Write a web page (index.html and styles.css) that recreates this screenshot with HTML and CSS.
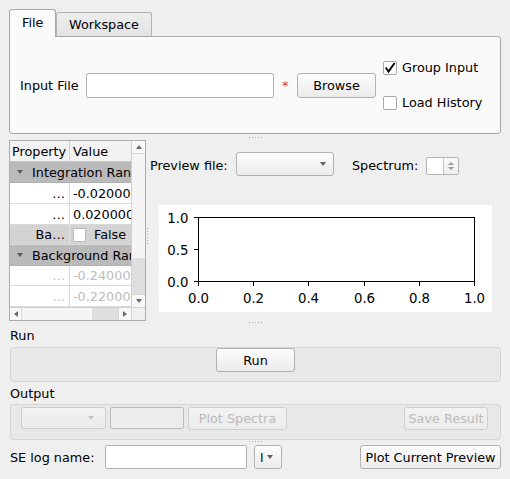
FILE: index.html
```html
<!DOCTYPE html>
<html>
<head>
<meta charset="utf-8">
<title>Integration</title>
<link rel="stylesheet" href="styles.css">
</head>
<body>
<div class="app">
  <div class="tabbar">
    <div class="tab tab-file active">File</div>
    <div class="tab tab-ws">Workspace</div>
  </div>
  <div class="tabpanel">
    <span class="lbl-input">Input File</span>
    <div class="input file-input"></div>
    <span class="req">*</span>
    <div class="btn browse">Browse</div>
    <div class="checks">
      <div class="check"><span class="box"><svg width="12" height="12" viewBox="0 0 12 12"><path d="M2.2 6.2 L4.6 9.6 L10 1.8" fill="none" stroke="#000" stroke-width="1.9" stroke-linecap="square" stroke-linejoin="miter"/></svg></span>Group Input</div>
      <div class="check"><span class="box"></span>Load History</div>
    </div>
  </div>
  <div class="hsplit"><span class="dots"></span></div>
  <div class="middle">
    <div class="table">
      <div class="viewport">
        <div class="thead"><div class="c1">Property</div><div class="c2">Value</div></div>
        <div class="grp"><span class="tri"></span>Integration Range</div>
        <div class="tr"><div class="c1">…</div><div class="c2">-0.020000</div></div>
        <div class="tr"><div class="c1">…</div><div class="c2">0.020000</div></div>
        <div class="tr sub"><div class="c1">Ba…</div><div class="c2"><span class="cb"></span>False</div></div>
        <div class="grp"><span class="tri"></span>Background Range</div>
        <div class="tr dis short"><div class="c1">…</div><div class="c2">-0.240000</div></div>
        <div class="tr dis"><div class="c1">…</div><div class="c2">-0.220000</div></div>
      </div>
      <div class="vscroll">
        <div class="sbtn"><span class="ar-up"></span></div>
        <div class="vhandle"></div>
        <div class="vtrack"></div>
        <div class="sbtn sbtn-down"><span class="ar-down"></span></div>
      </div>
      <div class="hscroll">
        <div class="hbtn"><span class="ar-left"></span></div>
        <div class="hhandle"></div>
        <div class="htrack"></div>
        <div class="hbtn hbtn-right"><span class="ar-right"></span></div>
      </div>
      <div class="corner"></div>
    </div>
    <div class="vsplit"><span class="vdots"></span></div>
    <div class="rightpane">
      <div class="preview-row">
        <span class="lbl-preview">Preview file:</span>
        <div class="btn combo preview-combo"><span class="ar-combo"></span></div>
        <span class="lbl-spectrum">Spectrum:</span>
        <div class="spin"><div class="spin-text"></div><div class="spin-btns"><span class="sp-up"></span><span class="sp-down"></span></div></div>
      </div>
      <div class="plot">
        <svg width="333" height="107" viewBox="0 0 333 107">
          <rect x="0" y="0" width="333" height="107" fill="#ffffff"/>
          <rect x="39.5" y="12.5" width="276" height="64" fill="none" stroke="#000" stroke-width="1"/>
          <g stroke="#000" stroke-width="1">
            <line x1="35" y1="12.5" x2="39.5" y2="12.5"/>
            <line x1="35" y1="44.5" x2="39.5" y2="44.5"/>
            <line x1="35" y1="76.5" x2="39.5" y2="76.5"/>
            <line x1="39.5" y1="76.5" x2="39.5" y2="81"/>
            <line x1="94.5" y1="76.5" x2="94.5" y2="81"/>
            <line x1="149.5" y1="76.5" x2="149.5" y2="81"/>
            <line x1="205.5" y1="76.5" x2="205.5" y2="81"/>
            <line x1="260.5" y1="76.5" x2="260.5" y2="81"/>
            <line x1="315.5" y1="76.5" x2="315.5" y2="81"/>
          </g>
          <g class="ticklbl">
            <text x="29.5" y="18" text-anchor="end">1.0</text>
            <text x="29.5" y="50" text-anchor="end">0.5</text>
            <text x="29.5" y="82" text-anchor="end">0.0</text>
            <text x="39.5" y="97.5" text-anchor="middle">0.0</text>
            <text x="94.5" y="97.5" text-anchor="middle">0.2</text>
            <text x="149.5" y="97.5" text-anchor="middle">0.4</text>
            <text x="205.5" y="97.5" text-anchor="middle">0.6</text>
            <text x="260.5" y="97.5" text-anchor="middle">0.8</text>
            <text x="315.5" y="97.5" text-anchor="middle">1.0</text>
          </g>
        </svg>
      </div>
    </div>
  </div>
  <div class="hsplit hsplit-b"><span class="dots"></span></div>
  <div class="sec-label run-label">Run</div>
  <div class="groupbox runbox">
    <div class="btn runbtn">Run</div>
  </div>
  <div class="sec-label out-label">Output</div>
  <div class="groupbox outbox">
    <div class="btn combo dis-combo"><span class="ar-combo ar-dis"></span></div>
    <div class="dis-input"></div>
    <div class="btn dis-btn plot-spectra">Plot Spectra</div>
    <div class="spacer"></div>
    <div class="btn dis-btn save-result">Save Result</div>
  </div>
  <div class="hsplit hsplit-c"><span class="dots"></span></div>
  <div class="se-row">
    <span class="lbl-se">SE log name:</span>
    <div class="input se-input"></div>
    <div class="btn combo se-combo"><span class="se-text">l</span><span class="ar-combo"></span></div>
    <div class="spacer"></div>
    <div class="btn plot-preview">Plot Current Preview</div>
  </div>
</div>
</body>
</html>
```

FILE: styles.css
```css
* { box-sizing: border-box; }
html, body { margin: 0; padding: 0; }
body {
  width: 510px;
  height: 479px;
  overflow: hidden;
  background: #efefef;
  font-family: "DejaVu Sans", "Noto Sans", sans-serif;
  font-size: 12.8px;
  color: #000;
}
.app {
  padding: 9px 9px 0 9px;
  display: flex;
  flex-direction: column;
}

/* tabs */
.tabbar { display: flex; align-items: flex-end; height: 27px; }
.tab {
  height: 24px;
  padding-left: 12px;
  display: flex;
  align-items: center;
  border: 1px solid #b4b4b4;
  border-bottom: none;
  border-radius: 3px 3px 0 0;
  background: linear-gradient(#ededed, #e3e3e3);
}
.tab.active {
  height: 28px;
  margin-bottom: -1px;
  background: #fafafa;
  border-color: #a9a9a9;
  position: relative;
  z-index: 1;
  padding-bottom: 2px;
}
.tab-file { width: 47px; }
.tab-ws { width: 96px; }

.tabpanel {
  height: 98px;
  border: 1px solid #a9a9a9;
  border-radius: 0 3px 3px 3px;
  background: #fafafa;
  display: flex;
  align-items: center;
  padding-left: 10px;
}
.lbl-input { width: 66px; }
.input {
  height: 25px;
  background: #fff;
  border: 1px solid #b3b3b3;
  border-radius: 2px;
}
.file-input { width: 188px; }
.req { color: #d8333f; margin-left: 8px; width: 15px; padding-top: 1px; }
.btn {
  height: 25px;
  border: 1px solid #b1b1b1;
  border-radius: 3px;
  background: linear-gradient(#fdfdfd, #ebebeb);
  display: flex;
  align-items: center;
  justify-content: center;
  white-space: nowrap;
}
.browse { width: 79px; }
.checks { margin-left: 7px; display: flex; flex-direction: column; gap: 15px; }
.check { display: flex; align-items: center; height: 20px; gap: 5px; }
.box {
  width: 14px;
  height: 14px;
  border: 1px solid #a8a8a8;
  border-radius: 2px;
  background: #fff;
  display: flex;
  align-items: center;
  justify-content: center;
}

/* splitters */
.hsplit { height: 6px; display: flex; justify-content: center; align-items: center; }
.dots {
  width: 14px;
  height: 1px;
  margin-left: 2px;
  background: repeating-linear-gradient(90deg, #a9a9a9 0 1px, transparent 1px 3px);
}
.vsplit { width: 3px; display: flex; align-items: center; justify-content: center; }
.vdots {
  width: 1px;
  height: 16px;
  margin-top: 10px;
  background: repeating-linear-gradient(180deg, #a9a9a9 0 1px, transparent 1px 3px);
}

/* middle */
.middle { height: 181px; display: flex; }

.table {
  width: 137px;
  height: 181px;
  border: 1px solid #acacac;
  display: grid;
  grid-template-columns: 121px 14px;
  grid-template-rows: 166px 13px;
  background: #fff;
}
.viewport { overflow: hidden; }
.thead {
  height: 21px;
  display: flex;
  background: #f2f2f2;
  border-bottom: 1px solid #c6c6c6;
}
.thead .c1 { border-right: 1px solid #d2d2d2; padding-left: 2px; }
.c1 { width: 60px; flex: none; display: flex; align-items: center; }
.c2 { flex: 1; display: flex; align-items: center; padding-left: 3px; white-space: nowrap; overflow: hidden; }
.grp {
  height: 21px;
  background: #bababa;
  display: flex;
  align-items: center;
  padding-left: 7px;
  white-space: nowrap;
  overflow: hidden;
  border-bottom: 1px solid #b0b0b0;
}
.tri {
  width: 0; height: 0;
  border-left: 3.5px solid transparent;
  border-right: 3.5px solid transparent;
  border-top: 4px solid #5c5c5c;
  margin-right: 9px;
  flex: none;
}
.tr {
  height: 21px;
  display: flex;
  border-bottom: 1px solid #dadada;
}
.tr .c1 { justify-content: flex-end; padding-right: 4px; border-right: 1px solid #dadada; }
.tr.sub { height: 20px; background: #d3d3d3; }
.tr.sub .c1 { border-right-color: #e2e2e2; }
.tr.short { height: 20px; }
.tr.dis { color: #bdbdbd; }
.cb {
  width: 13px;
  height: 14px;
  background: #fff;
  border: 1px solid #b8b8b8;
  border-radius: 1px;
  margin-right: 8px;
  flex: none;
}

.vscroll {
  display: flex;
  flex-direction: column;
  border-left: 1px solid #d0d0d0;
  background: #f6f6f6;
}
.sbtn {
  height: 13px;
  flex: none;
  display: flex;
  align-items: center;
  justify-content: center;
  border-bottom: 1px solid #d6d6d6;
  background: #f8f8f8;
}
.sbtn-down { border-bottom: none; border-top: 1px solid #d6d6d6; }
.vhandle { height: 104px; flex: none; background: #f5f5f5; }
.vtrack { flex: 1; background: #dedede; }
.ar-up {
  width: 0; height: 0;
  border-left: 3.5px solid transparent;
  border-right: 3.5px solid transparent;
  border-bottom: 4px solid #6a6a6a;
}
.ar-down {
  width: 0; height: 0;
  border-left: 3.5px solid transparent;
  border-right: 3.5px solid transparent;
  border-top: 4px solid #6a6a6a;
}
.hscroll {
  display: flex;
  border-top: 1px solid #d0d0d0;
  background: #f6f6f6;
}
.hbtn {
  width: 12px;
  flex: none;
  display: flex;
  align-items: center;
  justify-content: center;
  border-right: 1px solid #d6d6d6;
  background: #f8f8f8;
}
.hbtn-right { width: 13px; border-right: none; border-left: 1px solid #d6d6d6; }
.hhandle { width: 70px; flex: none; background: #f5f5f5; }
.htrack { flex: 1; background: #dedede; }
.ar-left {
  width: 0; height: 0;
  border-top: 3.5px solid transparent;
  border-bottom: 3.5px solid transparent;
  border-right: 4px solid #6a6a6a;
}
.ar-right {
  width: 0; height: 0;
  border-top: 3.5px solid transparent;
  border-bottom: 3.5px solid transparent;
  border-left: 4px solid #6a6a6a;
}
.corner { background: #efefef; border-left: 1px solid #d0d0d0; border-top: 1px solid #d0d0d0; }

/* right pane */
.rightpane { flex: 1; display: flex; flex-direction: column; }
.preview-row { margin-top: 12px; height: 24px; display: flex; align-items: center; }
.lbl-preview { margin-left: 1px; width: 86px; padding-top: 2px; }
.combo { height: 24px; justify-content: flex-end; padding-right: 7px; }
.preview-combo { width: 98px; }
.ar-combo {
  width: 0; height: 0;
  border-left: 3.5px solid transparent;
  border-right: 3.5px solid transparent;
  border-top: 4px solid #5e5e5e;
}
.lbl-spectrum { margin-left: 18px; width: 74px; padding-top: 2px; }
.spin {
  width: 33px;
  height: 18px;
  margin-top: 3px;
  border: 1px solid #b3b3b3;
  border-radius: 2px;
  background: #fff;
  display: flex;
}
.spin-text { flex: 1; }
.spin-btns {
  width: 15px;
  border-left: 1px solid #c4c4c4;
  background: linear-gradient(#fbfbfb, #eeeeee);
  display: flex;
  flex-direction: column;
  align-items: center;
  justify-content: center;
  gap: 2px;
}
.sp-up {
  width: 0; height: 0;
  border-left: 3px solid transparent;
  border-right: 3px solid transparent;
  border-bottom: 3px solid #9a9a9a;
}
.sp-down {
  width: 0; height: 0;
  border-left: 3px solid transparent;
  border-right: 3px solid transparent;
  border-top: 3px solid #9a9a9a;
}
.plot { margin-top: 29px; margin-left: 10px; width: 333px; height: 107px; }
.plot svg { display: block; }
.ticklbl text { font-family: "DejaVu Sans", sans-serif; font-size: 13.3px; fill: #000; }

/* bottom sections */
.hsplit-b { height: 5px; align-items: flex-start; padding-top: 1px; }
.hsplit-c { height: 5px; align-items: flex-start; padding-top: 1px; }
.sec-label { padding-left: 1px; display: flex; align-items: center; }
.run-label { height: 18px; margin-bottom: 3px; }
.out-label { height: 22px; }
.groupbox {
  margin-left: 1px;
  border: 1px solid #d5d5d5;
  border-radius: 3px;
  background: #e8e8e8;
}
.runbox { height: 35px; display: flex; justify-content: center; align-items: flex-start; }
.runbtn { width: 79px; height: 24px; }
.outbox { height: 36px; display: flex; align-items: flex-start; padding: 2px 12px 0 10px; }
.dis-combo {
  width: 85px;
  height: 22px;
  border-color: #cdcdcd;
  background: linear-gradient(#f3f3f3, #ebebeb);
  padding-right: 11px;
}
.ar-dis { border-top-color: #c4c4c4; }
.dis-input {
  width: 74px;
  height: 22px;
  margin-left: 4px;
  border: 1px solid #bcbcbc;
  border-radius: 2px;
  background: #ececec;
}
.dis-btn {
  height: 23px;
  border-color: #cfcfcf;
  background: linear-gradient(#f3f3f3, #ebebeb);
  color: #bbbbbb;
}
.plot-spectra { width: 99px; margin-left: 4px; }
.save-result { width: 84px; }
.spacer { flex: 1; }

.se-row { height: 24px; display: flex; align-items: center; }
.lbl-se { padding-left: 1px; width: 96px; }
.se-input { width: 142px; height: 24px; }
.se-combo { width: 28px; margin-left: 7px; justify-content: space-between; padding: 0 8px 0 5px; }
.se-text { padding-top: 1px; }
.plot-preview { width: 141px; height: 24px; }
```
